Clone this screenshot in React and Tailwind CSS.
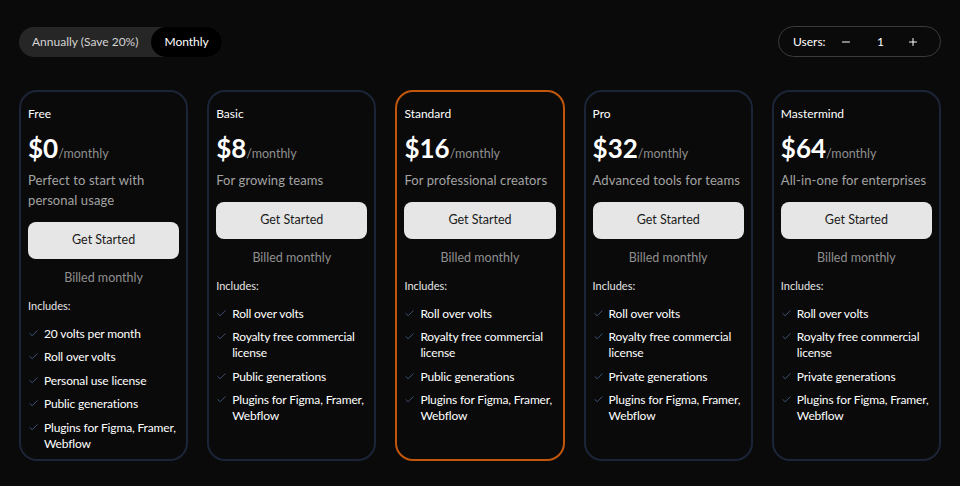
import React, { useState } from "react";
import { Check, Minus, Plus } from "lucide-react";

const plans = [
  {
    name: "Free",
    price: "$0",
    desc: "Perfect to start with personal usage",
    features: [
      "20 volts per month",
      "Roll over volts",
      "Personal use license",
      "Public generations",
      "Plugins for Figma, Framer, Webflow",
    ],
  },
  {
    name: "Basic",
    price: "$8",
    desc: "For growing teams",
    features: [
      "Roll over volts",
      "Royalty free commercial license",
      "Public generations",
      "Plugins for Figma, Framer, Webflow",
    ],
  },
  {
    name: "Standard",
    price: "$16",
    desc: "For professional creators",
    highlight: true,
    features: [
      "Roll over volts",
      "Royalty free commercial license",
      "Public generations",
      "Plugins for Figma, Framer, Webflow",
    ],
  },
  {
    name: "Pro",
    price: "$32",
    desc: "Advanced tools for teams",
    features: [
      "Roll over volts",
      "Royalty free commercial license",
      "Private generations",
      "Plugins for Figma, Framer, Webflow",
    ],
  },
  {
    name: "Mastermind",
    price: "$64",
    desc: "All-in-one for enterprises",
    features: [
      "Roll over volts",
      "Royalty free commercial license",
      "Private generations",
      "Plugins for Figma, Framer, Webflow",
    ],
  },
];

function PlanCard({ plan }) {
  return (
    <div
      className={`flex flex-col rounded-[18px] border-2 px-[7px] pt-[14px] pb-[7px] ${
        plan.highlight ? "border-[#c2570c]" : "border-[#1c2438]"
      }`}
    >
      <div className="text-[12px] leading-4 text-white">{plan.name}</div>
      <div className="mt-[11px] flex items-baseline">
        <span className="text-[26px] font-bold leading-[30px] text-white">
          {plan.price}
        </span>
        <span className="text-[12.5px] text-[#8f8f8f]">/monthly</span>
      </div>
      <p className="mt-[6px] text-[13px] leading-5 tracking-[0.1px] text-[#a3a3a3]">
        {plan.desc}
      </p>
      <button className="mt-3 h-[37px] w-full rounded-lg bg-[#e6e6e6] text-[12.5px] text-[#1a1a1a]">
        Get Started
      </button>
      <div className="mt-[10px] text-center text-[12.5px] leading-[18px] text-[#8f8f8f]">
        Billed monthly
      </div>
      <div className="mt-3 text-[11px] leading-[14px] text-[#e5e5e5]">
        Includes:
      </div>
      <ul className="mt-[13px] flex flex-col gap-[7.5px]">
        {plan.features.map((f) => (
          <li key={f} className="flex items-start gap-[5px]">
            <Check
              size={11}
              strokeWidth={2}
              className="mt-[2px] shrink-0 text-[#42597f]"
            />
            <span className="text-[12px] leading-[16px] tracking-[-0.15px] text-white">
              {f}
            </span>
          </li>
        ))}
      </ul>
    </div>
  );
}

export default function App() {
  const [users, setUsers] = useState(1);
  const [billing, setBilling] = useState("monthly");
  return (
    <div
      className="min-h-[486px] bg-[#0a0a0a] px-[19px] pt-[26px] pb-[26px]"
      style={{ fontFamily: '"Segoe UI", Lato, "Open Sans", sans-serif' }}
    >
      <div className="flex items-center justify-between">
        <div className="flex h-[30px] items-center rounded-full bg-[#262626]">
          <button
            onClick={() => setBilling("annual")}
            className={`h-full rounded-full px-[13px] text-[12px] ${
              billing === "annual" ? "bg-black text-white" : "text-[#d4d4d4]"
            }`}
          >
            Annually (Save 20%)
          </button>
          <button
            onClick={() => setBilling("monthly")}
            className={`h-full rounded-full px-[13px] text-[12px] ${
              billing === "monthly" ? "bg-black text-white" : "text-[#d4d4d4]"
            }`}
          >
            Monthly
          </button>
        </div>
        <div className="flex h-[31px] items-center rounded-full border border-[#3a3a3f] pl-[14px] pr-[21px] text-[12px] text-white">
          <span className="w-[32px]">Users:</span>
          <button
            className="ml-[15px]"
            onClick={() => setUsers((u) => Math.max(1, u - 1))}
          >
            <Minus size={12} />
          </button>
          <span className="ml-[25px] w-[6px] text-center">{users}</span>
          <button className="ml-[24px]" onClick={() => setUsers((u) => u + 1)}>
            <Plus size={12} />
          </button>
        </div>
      </div>
      <div className="mt-[33px] grid h-[370px] grid-cols-5 gap-[19px]">
        {plans.map((p) => (
          <PlanCard key={p.name} plan={p} />
        ))}
      </div>
    </div>
  );
}
